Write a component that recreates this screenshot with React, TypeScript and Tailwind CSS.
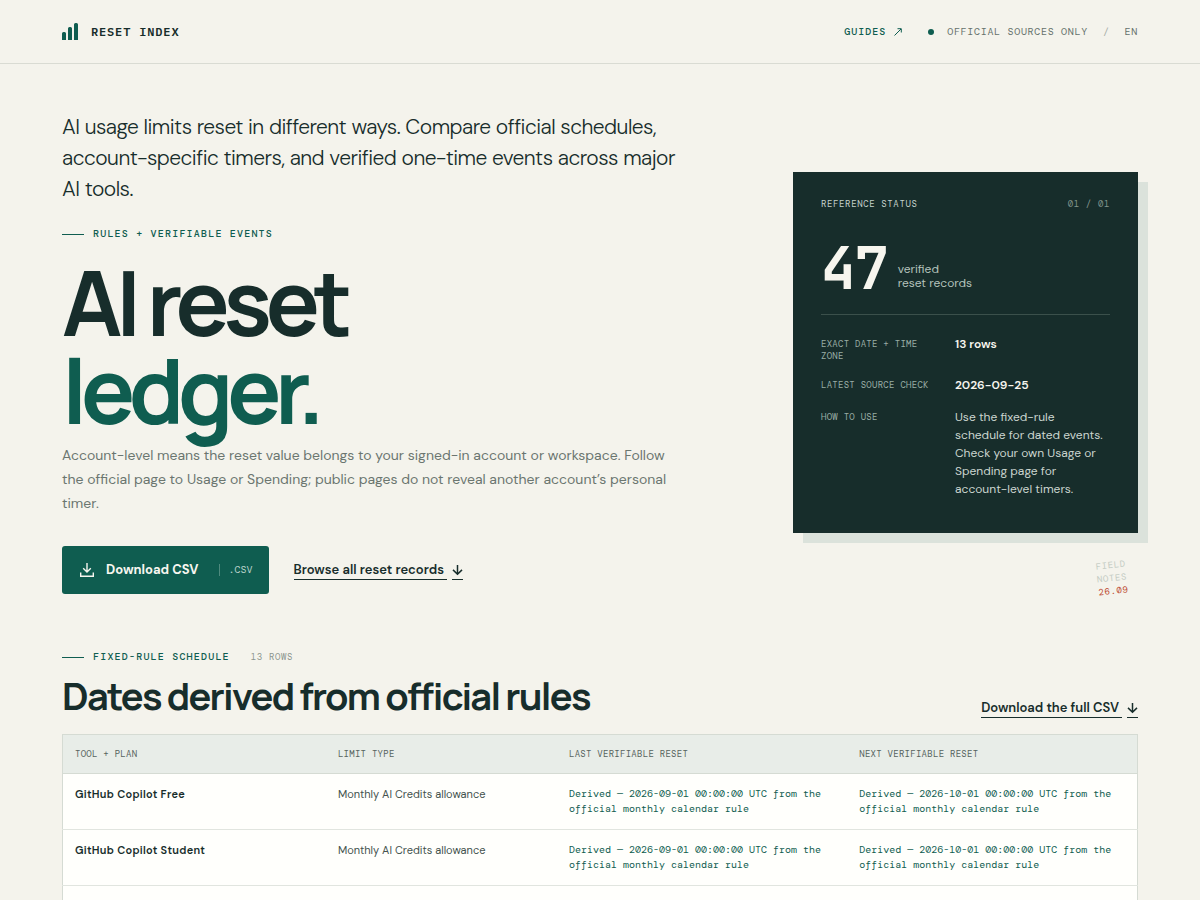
import React from "react";

const sans = "font-['DM_Sans',Inter,sans-serif]";
const mono = "font-['DM_Mono','Liberation_Mono',monospace]";
const brandMono = "font-['IBM_Plex_Mono','Liberation_Mono',monospace]";
const figureMono = "font-['JetBrains_Mono','Liberation_Mono',monospace]";
const display = "font-['Manrope',Inter,sans-serif]";

const records = [
  { tool: "GitHub Copilot Free", limit: "Monthly AI Credits allowance" },
  { tool: "GitHub Copilot Student", limit: "Monthly AI Credits allowance" },
];

const columns = [
  { title: "Tool + plan", width: "w-[24.5%]" },
  { title: "Limit type", width: "w-[21.5%]" },
  { title: "Last verifiable reset", width: "w-[27%]" },
  { title: "Next verifiable reset", width: "w-[27%]" },
];

function DownArrow() {
  return (
    <svg width="11" height="12" viewBox="0 0 11 12" fill="none" stroke="currentColor" strokeWidth="1.5" aria-hidden="true">
      <path d="M5.5 1v9.2M1 5.9l4.5 4.4L10 5.9" />
    </svg>
  );
}

function ArrowLink({ href, children }: { href: string; children: React.ReactNode }) {
  return (
    <a href={href} className="flex gap-[5px] text-[13px] leading-[18px] font-semibold">
      <span className="border-b border-current pr-[3px]">{children}</span>
      <span className="flex items-center border-b border-current">
        <DownArrow />
      </span>
    </a>
  );
}

function Eyebrow({ children }: { children: React.ReactNode }) {
  return (
    <p className={`${mono} flex items-center gap-[9px] text-[10px] leading-4 font-medium tracking-[0.12em] text-[#0f5d50] uppercase`}>
      <span className="h-px w-[22px] bg-current" />
      {children}
    </p>
  );
}

function Header() {
  return (
    <header className="border-b border-[#d9dbd3]">
      <div className="flex h-[63px] items-center justify-between px-[62px]">
        <a href="#top" className="flex items-center gap-[13px]">
          <svg width="16" height="17" viewBox="0 0 16 17" fill="#0f5d50" aria-hidden="true">
            <path d="M0 17v-6.500a1.500 1.500 0 0 1 1.500-1.500h1a1.500 1.500 0 0 1 1.500 1.500V17zM6 17V5.500A1.500 1.500 0 0 1 7.500 4h1A1.500 1.500 0 0 1 10 5.500V17zM12 17V1.500A1.500 1.500 0 0 1 13.500 0h1A1.500 1.500 0 0 1 16 1.500V17z" />
          </svg>
          <span className={`${brandMono} text-xs font-semibold tracking-[0.07em]`}>RESET INDEX</span>
        </a>
        <nav className={`${mono} flex items-center text-[10px] leading-4 tracking-[0.07em] text-[#65716b]`}>
          <a href="#guides" className="mr-[26px] flex items-center gap-2 font-medium tracking-widest text-[#0f5d50]">
            GUIDES
            <svg width="8" height="8" viewBox="0 0 8 8" fill="none" stroke="currentColor" aria-hidden="true">
              <path d="M.5 7.500L7 1M3.500.700H7.300V4.500" />
            </svg>
          </a>
          <span className="mr-[13px] size-[6px] rounded-full bg-[#0f5d50]" />
          <span>OFFICIAL SOURCES ONLY</span>
          <span className="mx-[15px] text-[#a8afa8]">/</span>
          <span>EN</span>
        </nav>
      </div>
    </header>
  );
}

function StatusRow({ label, children }: { label: string; children: React.ReactNode }) {
  return (
    <div className="grid grid-cols-[118px_minmax(0,1fr)] gap-4 py-[7px]">
      <dt className={`${mono} pt-[3px] text-[9px] leading-3 tracking-[0.03em] text-[#9aada6] uppercase`}>{label}</dt>
      <dd className="pr-[3px] text-xs leading-[18px]">{children}</dd>
    </div>
  );
}

function StatusCard() {
  return (
    <aside className="bg-[#172d2b] px-7 pt-6 pb-7 text-[#f7f6ef] shadow-[10px_10px_0_#dbe2db]">
      <div className={`${mono} flex justify-between text-[9px] leading-4 tracking-[0.07em]`}>
        <span className="text-[#c5d2cb]">REFERENCE STATUS</span>
        <span className="text-[#83978f]">01 / 01</span>
      </div>
      <div className="mt-[25px] flex items-end gap-[10px] border-b border-[#3b504b] pb-[14px]">
        <strong className={`${figureMono} text-[58px] leading-[63px] font-bold tracking-tight`}>47</strong>
        <span className="pb-[10px] text-xs leading-[14px] text-[#b4c2bb]">
          verified
          <br />
          reset records
        </span>
      </div>
      <dl className="mt-[13px]">
        <StatusRow label="Exact date + time zone">
          <strong className="font-semibold">13 rows</strong>
        </StatusRow>
        <StatusRow label="Latest source check">
          <strong className="font-semibold">2026-09-25</strong>
        </StatusRow>
        <StatusRow label="How to use">
          <span className="text-[#cbd5cf]">
            Use the fixed-rule schedule for dated events. Check your own Usage or Spending page for account-level timers.
          </span>
        </StatusRow>
      </dl>
    </aside>
  );
}

function Hero() {
  return (
    <section className="grid grid-cols-[minmax(0,1fr)_345px] gap-[110px] px-[62px] pt-12">
      <div>
        <p className="text-[21px] leading-[31px] font-light tracking-tight">
          AI usage limits reset in different ways. Compare official schedules, account-specific timers, and verified
          one-time events across major AI tools.
        </p>
        <div className="mt-[21px]">
          <Eyebrow>Rules + verifiable events</Eyebrow>
        </div>
        <h1 className={`${display} mt-4 text-[90px] leading-[88px] font-bold tracking-[-0.07em]`}>
          AI reset
          <br />
          <span className="text-[#0f5d50]">ledger.</span>
        </h1>
        <p className="mt-[9px] text-sm leading-6 text-[#6b7670]">
          Account-level means the reset value belongs to your signed-in account or workspace. Follow the official page
          to Usage or Spending; public pages do not reveal another account’s personal timer.
        </p>
        <div className="mt-[31px] flex items-center gap-[25px]">
          <a href="#csv" className="flex h-12 items-center rounded-[3px] bg-[#0f5d50] px-4 text-[13px] font-bold text-[#f7f6ef]">
            <svg className="mr-[10px]" width="18" height="18" viewBox="0 0 18 18" fill="none" stroke="currentColor" strokeWidth="1.400" aria-hidden="true">
              <path d="M9 2v9M5.200 7.300L9 11l3.800-3.700M2.700 11.500v3.800h12.600v-3.800" />
            </svg>
            Download CSV
            <span className={`${mono} ml-5 border-l border-[#4f8a7e] pl-[9px] text-[10px] leading-3 font-normal text-[#b9d3ca]`}>
              .CSV
            </span>
          </a>
          <ArrowLink href="#records">Browse all reset records</ArrowLink>
        </div>
      </div>
      <div className="flex flex-col items-end pt-[60px]">
        <div className="w-full">
          <StatusCard />
        </div>
        <p className={`${mono} mt-[26px] mr-[11px] -rotate-6 text-right text-[9px] leading-[13px] tracking-[0.07em] text-[#c3cbc3]`}>
          FIELD
          <br />
          NOTES
          <br />
          <span className="text-[#bd4a30]">26.09</span>
        </p>
      </div>
    </section>
  );
}

function Schedule() {
  return (
    <section id="records" className="px-[62px] pt-[50px]">
      <div className="flex items-end justify-between">
        <div>
          <div className="flex items-center gap-[21px] pt-px">
            <Eyebrow>Fixed-rule schedule</Eyebrow>
            <span className={`${mono} text-[9px] leading-4 tracking-[0.07em] text-[#8b958e]`}>13 ROWS</span>
          </div>
          <h2 className={`${display} mt-[7px] text-[38px] leading-[46px] font-bold tracking-[-0.045em]`}>
            Dates derived from official rules
          </h2>
        </div>
        <ArrowLink href="#csv">Download the full CSV</ArrowLink>
      </div>
      <table className="mt-4 w-full table-fixed border border-[#d5dbd3] bg-[#fffffc] text-left">
        <thead className="bg-[#e8ede8]">
          <tr>
            {columns.map((column) => (
              <th
                key={column.title}
                scope="col"
                className={`${column.width} ${mono} h-[39px] border-b border-[#d5dbd3] px-3 pt-[2px] text-[9px] font-normal tracking-[0.03em] text-[#56635d] uppercase`}
              >
                {column.title}
              </th>
            ))}
          </tr>
        </thead>
        <tbody>
          {records.map((record) => (
            <tr key={record.tool} className="border-b border-[#e1e5df] align-top text-[11px] leading-[15px]">
              <th scope="row" className="px-3 py-[13px] font-semibold tracking-wide">
                {record.tool}
              </th>
              <td className="px-3 py-[13px] text-[#44534e]">{record.limit}</td>
              <td className={`${mono} px-3 pt-3 pb-[13px] text-[10px] text-[#0f5d50]`}>
                Derived — 2026-09-01 00:00:00 UTC from the official monthly calendar rule
              </td>
              <td className={`${mono} px-3 pt-3 pb-[13px] text-[10px] text-[#0f5d50]`}>
                Derived — 2026-10-01 00:00:00 UTC from the official monthly calendar rule
              </td>
            </tr>
          ))}
          <tr className="h-14">
            <td colSpan={4} />
          </tr>
        </tbody>
      </table>
    </section>
  );
}

export default function App() {
  return (
    <div id="top" className={`${sans} h-screen overflow-hidden bg-[#f4f3ec] text-[#172d2b]`}>
      <Header />
      <main>
        <Hero />
        <Schedule />
      </main>
    </div>
  );
}
